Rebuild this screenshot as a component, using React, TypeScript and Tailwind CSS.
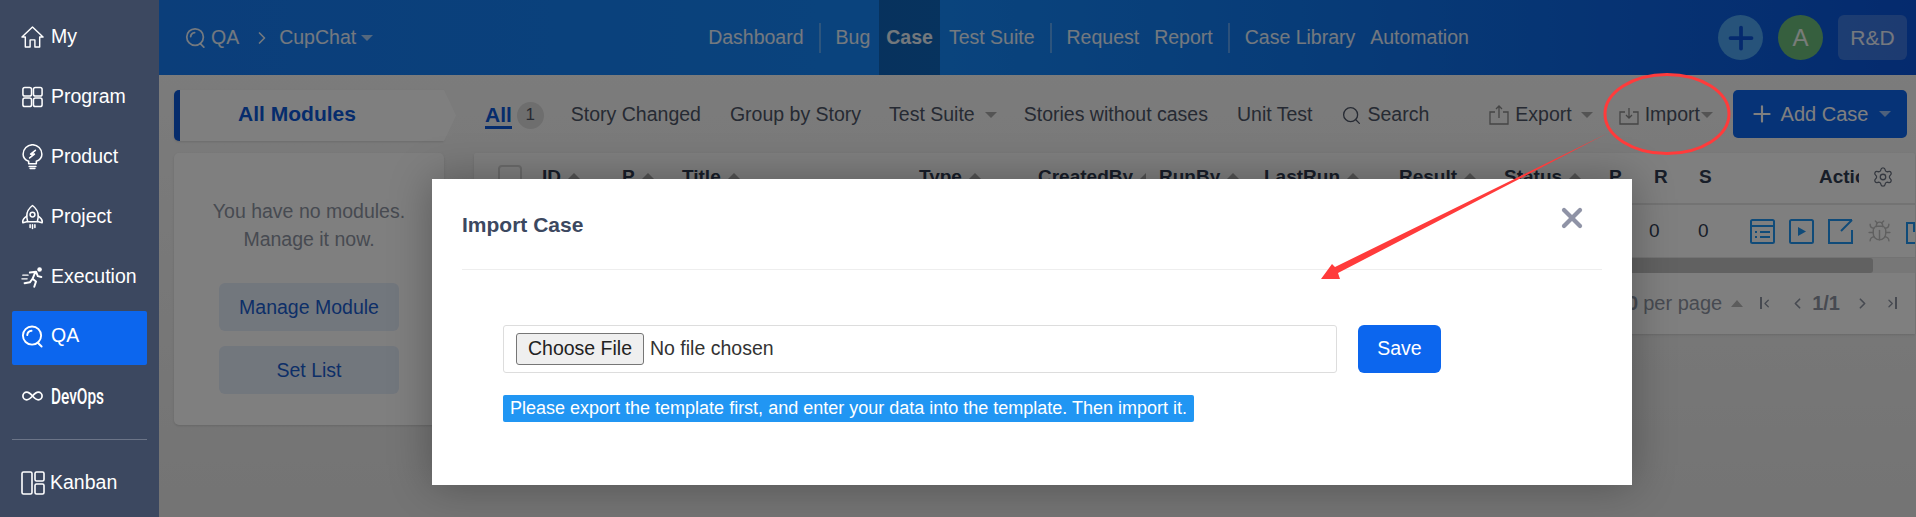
import { ReactNode } from 'react';
import { ChevronLeft, ChevronRight, Settings, Search, Plus, X, Bug, Infinity as InfinityIcon } from 'lucide-react';

const ARIAL = 'font-["Liberation_Sans",Arial,sans-serif]';

function QaIcon({ size = 24 }: { size?: number }) {
  return (
    <svg width={size} height={size} viewBox="0 0 24 24" fill="none" stroke="currentColor" strokeWidth="2" strokeLinecap="round">
      <circle cx="11.5" cy="11.5" r="9.5" />
      <path d="M17.5 19l4 4" />
      <path d="M6.5 11a5 5 0 0 1 4.5-4.5" />
    </svg>
  );
}

function HomeIcon() {
  return (
    <svg width="24" height="24" viewBox="0 0 24 24" fill="none" stroke="currentColor" strokeWidth="1.5" strokeLinejoin="round">
      <path d="M1 12L12 1.5 23 12h-3.5v10.5h-5V15h-5v7.5h-5V12z" />
    </svg>
  );
}

function ProgramIcon() {
  return (
    <svg width="24" height="24" viewBox="0 0 24 24" fill="none" stroke="currentColor" strokeWidth="1.6">
      <rect x="2" y="2" width="9" height="9" rx="2" />
      <rect x="13" y="2" width="9" height="9" rx="2" />
      <rect x="2" y="13" width="9" height="9" rx="2" />
      <rect x="13" y="13" width="9" height="9" rx="2" />
    </svg>
  );
}

function ProductIcon() {
  return (
    <svg width="24" height="26" viewBox="0 0 24 26" fill="none" stroke="currentColor" strokeWidth="1.6" strokeLinecap="round" strokeLinejoin="round">
      <path d="M8 20v-2.5C4.5 16 2.2 13 2.2 10a9.8 9.8 0 0 1 19.6 0c0 3-2.3 6-5.8 7.5V20z" />
      <path d="M8.5 23h7M9.5 25h5" />
      <path d="M15 6l-5 4h4l-5 4" fill="currentColor" />
    </svg>
  );
}

function ProjectIcon() {
  return (
    <svg width="24" height="26" viewBox="0 0 24 26" fill="none" stroke="currentColor" strokeWidth="1.6" strokeLinecap="round" strokeLinejoin="round">
      <path d="M12 1c4 3 6 7 6 11 0 2-.5 4-1 6H7c-.5-2-1-4-1-6 0-4 2-8 6-11z" />
      <circle cx="12" cy="10.5" r="2.5" />
      <path d="M6 12c-3 2-5 4-4 7l4-1M18 12c3 2 5 4 4 7l-4-1" />
      <path d="M9.5 21v3M12 21v4M14.5 21v3" />
    </svg>
  );
}

function RunIcon() {
  return (
    <svg width="26" height="24" viewBox="0 0 26 24" fill="none" stroke="currentColor" strokeWidth="2.2" strokeLinecap="round" strokeLinejoin="round">
      <circle cx="21" cy="3.5" r="2.6" fill="currentColor" stroke="none" />
      <path d="M10 7l7-1 2 5 4 1M16 7l-3 7 4 3-2 6M13 14l-3 4-6 1" />
      <path d="M2 10h6M1 14h6" strokeWidth="1.4" />
    </svg>
  );
}

function KanbanIcon() {
  return (
    <svg width="24" height="24" viewBox="0 0 24 24" fill="none" stroke="currentColor" strokeWidth="1.6">
      <rect x="1" y="1" width="10" height="22" rx="1.5" />
      <rect x="14" y="1" width="9" height="9" rx="1.5" />
      <rect x="14" y="13" width="9" height="10" rx="1.5" />
    </svg>
  );
}

function ExportIcon({ down }: { down?: boolean }) {
  return (
    <svg width="20" height="20" viewBox="0 0 20 20" fill="none" stroke="#8a8a8a" strokeWidth="1.3">
      <path d="M6 7H1v12h18V7h-5" />
      {down ? <path d="M10 3v10M7 10l3 3 3-3" /> : <path d="M10 13V1M7 4l3-3 3 3" />}
    </svg>
  );
}

function Caret({ className = '' }: { className?: string }) {
  return <span className={`inline-block w-0 h-0 border-x-[6px] border-x-transparent border-t-[6px] border-t-current ${className}`} />;
}

function SortArrow() {
  return <span className="inline-block w-0 h-0 ml-[6px] mb-[3px] border-x-[7px] border-x-transparent border-b-[7px] border-b-[#a8a8a8]" />;
}

function SideItem({ icon, label, active }: { icon: ReactNode; label: string; active?: boolean }) {
  return (
    <div className={`h-[54px] mx-3 pl-[9px] flex items-center gap-[7px] rounded-[2px] text-white text-[19.5px] ${active ? 'bg-[#0c66ee] mt-[1px] mb-[4px] pb-[4px]' : 'mb-[6px]'}`}>
      <span className="w-[23px] flex justify-center shrink-0">{icon}</span>
      <span>{label}</span>
    </div>
  );
}

function Sidebar() {
  return (
    <aside className="w-[159px] shrink-0 bg-[#3c4860] pt-[10px] flex flex-col">
      <SideItem icon={<HomeIcon />} label="My" />
      <SideItem icon={<ProgramIcon />} label="Program" />
      <SideItem icon={<ProductIcon />} label="Product" />
      <SideItem icon={<ProjectIcon />} label="Project" />
      <SideItem icon={<RunIcon />} label="Execution" />
      <SideItem icon={<QaIcon />} label="QA" active />
      <div className="h-[54px] mx-3 pl-[9px] flex items-center gap-[7px] text-white">
        <span className="w-[23px] flex justify-center shrink-0"><InfinityIcon size={26} strokeWidth={1.8} /></span>
        <span className='text-[22px] font-medium font-["Roboto",sans-serif] scale-x-[0.7] origin-left'>DevOps</span>
      </div>
      <div className="mx-3 mt-4 border-t border-[#6b7487]" />
      <div className="h-[54px] mx-3 mt-4 pl-[9px] flex items-center gap-[5px] text-white text-[19.5px]">
        <KanbanIcon />
        <span>Kanban</span>
      </div>
    </aside>
  );
}

function NavDivider() {
  return <span className="w-[2px] h-[30px] bg-white/30 mx-[15px]" />;
}

function TopBar() {
  return (
    <header className="h-[75px] shrink-0 flex items-center bg-[linear-gradient(90deg,#167cf5_0%,#1488fb_45%,#0f78f0_65%,#0a55dc_100%)] text-white/90 text-[19.5px] pl-[26px] pr-[9px]">
      <QaIcon size={21} />
      <span className="ml-[5px]">QA</span>
      <ChevronRight size={20} className="ml-[13px]" />
      <span className="ml-[7px]">CupChat</span>
      <Caret className="ml-[5px] opacity-70" />
      <nav className="ml-[335px] flex items-center h-full">
        <span>Dashboard</span>
        <NavDivider />
        <span>Bug</span>
        <span className="ml-[9px] h-full px-[7px] flex items-center font-bold bg-black/25">Case</span>
        <span className="ml-[9px]">Test Suite</span>
        <NavDivider />
        <span>Request</span>
        <span className="ml-[15px]">Report</span>
        <NavDivider />
        <span>Case Library</span>
        <span className="ml-[15px]">Automation</span>
      </nav>
      <div className="ml-auto flex items-center">
        <span className="w-[45px] h-[45px] rounded-full bg-[#4ea6f5] flex items-center justify-center text-[#0a55dc]">
          <Plus size={36} strokeWidth={2.5} />
        </span>
        <span className="ml-[15px] w-[45px] h-[45px] rounded-full bg-[#6cbf7c] flex items-center justify-center text-[24px]">A</span>
        <span className="ml-[15px] w-[69px] h-[45px] rounded-[6px] bg-white/20 flex items-center justify-center text-[21px]">R&amp;D</span>
      </div>
    </header>
  );
}

function ToolBar() {
  return (
    <div className="h-[78px] shrink-0 flex items-center pt-[2px] pl-[15px] pr-[9px] text-[19.5px] text-[#4d5566]">
      <div className="relative mt-[1px] w-[270px] h-[51px] bg-white shadow-sm rounded-l-[5px] border-l-[6px] border-[#0c58d8] flex items-center justify-center font-bold text-[21px] text-[#0c58d8] mr-[41px] pr-[30px] pb-[3px]">
        All Modules
        <span className="absolute left-full top-0 w-[12px] h-full bg-white [clip-path:polygon(0_0,100%_50%,0_100%)]" />
      </div>
      <div className="relative text-[#0c58d8] font-bold text-[21px]">
        All
        <span className="absolute left-0 right-0 top-[27px] h-[3px] bg-[#0c58d8]" />
      </div>
      <span className="ml-[5px] w-[27px] h-[27px] rounded-full bg-[#dcdcdc] flex items-center justify-center text-[17px]">1</span>
      <span className="ml-[27px]">Story Changed</span>
      <span className="ml-[29px]">Group by Story</span>
      <span className="ml-[28px]">Test Suite</span>
      <Caret className="ml-[10px] text-[#a8a8a8]" />
      <span className="ml-[27px]">Stories without cases</span>
      <span className="ml-[29px]">Unit Test</span>
      <Search size={21} className="ml-[28px] mr-[6px]" strokeWidth={1.5} />
      <span>Search</span>
      <span className="ml-[60px] mr-[6px]"><ExportIcon /></span>
      <span>Export</span>
      <Caret className="ml-[9px] text-[#a8a8a8]" />
      <span className="ml-[26px] mr-[6px]"><ExportIcon down /></span>
      <span>Import</span>
      <Caret className="ml-[1px] text-[#a8a8a8]" />
      <button className="ml-auto mb-[2px] w-[174px] h-[48px] rounded-[5px] bg-[#0c66ee] text-white text-[20px] flex items-center justify-center gap-[6px]">
        <Plus size={26} strokeWidth={2} />
        Add Case
        <Caret className="ml-[5px] opacity-60" />
      </button>
    </div>
  );
}

function ModulePanel() {
  return (
    <div className="w-[270px] h-[272px] shrink-0 ml-[15px] bg-white rounded-[5px] shadow-sm flex flex-col items-center pt-[44px] text-[#8e95a3] text-[19.5px] leading-[28px]">
      <p>You have no modules.</p>
      <p>Manage it now.</p>
      <button className="mt-[30px] w-[180px] h-[48px] rounded-[6px] bg-[#e5eefb] text-[#1a5ed0]">Manage Module</button>
      <button className="mt-[15px] w-[180px] h-[48px] rounded-[6px] bg-[#e5eefb] text-[#1a5ed0]">Set List</button>
    </div>
  );
}

const HEAD_CELLS = [
  { label: 'ID', w: 'w-[80px]', sort: true },
  { label: 'P', w: 'w-[60px]', sort: true },
  { label: 'Title', w: 'w-[237px]', sort: true },
  { label: 'Type', w: 'w-[119px]', sort: true },
  { label: 'CreatedBy', w: 'w-[108px] mr-[13px] overflow-hidden', sort: true },
  { label: 'RunBy', w: 'w-[105px]', sort: true },
  { label: 'LastRun', w: 'w-[135px]', sort: true },
  { label: 'Result', w: 'w-[105px]', sort: true },
  { label: 'Status', w: 'w-[105px]', sort: true },
  { label: 'P', w: 'w-[45px]', sort: false },
  { label: 'R', w: 'w-[45px]', sort: false },
  { label: 'S', w: 'w-[120px]', sort: false },
];

function RowIcon({ children }: { children: ReactNode }) {
  return (
    <svg width="25" height="25" viewBox="0 0 25 25" fill="none" stroke="#2196f3" strokeWidth="2" className="shrink-0">
      {children}
    </svg>
  );
}

function CaseTable() {
  return (
    <div className="flex-1 min-w-0 ml-[30px] mr-[1px] h-[181px] bg-white shadow-sm text-[#313c52] overflow-hidden rounded-t-[3px]">
      <div className="h-[52px] pl-[24px] flex items-center bg-white border-b-2 border-[#e6e6e6] font-bold text-[19px] pb-[2px]">
        <span className="w-[24px] h-[24px] rounded-[4px] border-2 border-[#d6d6d6] mr-[20px] shrink-0" />
        {HEAD_CELLS.map((c, i) => (
          <span key={i} className={`${c.w} shrink-0 whitespace-nowrap`}>
            {c.label}
            {c.sort && <SortArrow />}
          </span>
        ))}
        <span className="w-[40px] overflow-hidden shrink-0 whitespace-nowrap">Action</span>
        <Settings size={22} strokeWidth={1.4} className="ml-[13px] text-[#6b7280]" />
      </div>
      <div className="h-[53px] flex items-center border-b border-[#e6e6e6] text-[19px] pl-[1175px] overflow-hidden">
        <span className="w-[49px] shrink-0">0</span>
        <span className="w-[52px] shrink-0">0</span>
        <div className="flex items-center gap-[14px]">
          <RowIcon>
            <rect x="1" y="1" width="23" height="23" rx="1.5" />
            <path d="M1 7h23M5 13h2M10 13h10M5 18h2M10 18h10" />
          </RowIcon>
          <RowIcon>
            <rect x="1" y="1" width="23" height="23" rx="1.5" />
            <path d="M9 8l8 4.5-8 4.5z" fill="#2196f3" stroke="none" />
          </RowIcon>
          <RowIcon>
            <path d="M24 1H1v23h23V11" />
            <path d="M24 1L13 12" />
          </RowIcon>
          <Bug size={25} strokeWidth={1.4} className="text-[#c0c0c0] shrink-0" />
          <RowIcon>
            <path d="M1 4h15l8 0v20H1zM8 4v8h8V4" />
          </RowIcon>
        </div>
      </div>
      <div className="h-[15px] bg-[#eeeeee]">
        <div className="h-full w-[1399px] rounded-[3px] bg-[#c2c2c2]" />
      </div>
      <div className="h-[60px] flex items-center text-[#8e95a3] text-[20px] justify-end pr-[18px]">
        <span className="font-bold mr-[5px]">0</span>
        <span>per page</span>
        <span className="ml-[9px] mr-[17px] w-0 h-0 border-x-[6px] border-x-transparent border-b-[7px] border-b-[#b8b8b8]" />
        <span className="mr-[16px] w-[13px] flex items-center"><span className="w-[2px] h-[12px] bg-current" /><ChevronLeft size={15} strokeWidth={2.4} className="-ml-[2px]" /></span>
        <ChevronLeft size={17} strokeWidth={2.4} />
        <span className="ml-[6px] mr-[14px] font-bold text-[20px]">1/1</span>
        <ChevronRight size={17} strokeWidth={2.4} />
        <span className="ml-[13px] w-[13px] flex items-center"><ChevronRight size={15} strokeWidth={2.4} /><span className="w-[2px] h-[12px] bg-current -ml-[2px]" /></span>
      </div>
    </div>
  );
}

function ImportModal() {
  return (
    <div className="absolute left-[273px] top-[179px] w-[1200px] h-[306px] bg-white shadow-[0_0_40px_rgba(0,0,0,0.3)]">
      <div className="mx-[30px] h-[91px] border-b border-[#eeeeee] flex items-start justify-between">
        <h2 className="mt-[35px] text-[#3c4860] font-bold text-[21px] leading-[22px]">Import Case</h2>
        <X size={32} strokeWidth={3.2} className="mt-[23px] mr-[14px] text-[#8f93a6]" />
      </div>
      <div className="mt-[55px] ml-[71px] w-[938px] flex gap-[21px]">
        <div className="flex-1 h-[48px] rounded-[3px] border border-[#dddddd] pl-[12px] flex items-center text-[19.5px] text-[#333333]">
          <span className="h-[32px] w-[128px] rounded-[3px] border border-[#767676] bg-[#efefef] text-[#222222] flex items-center justify-center">Choose File</span>
          <span className="ml-[6px]">No file chosen</span>
        </div>
        <button className="w-[83px] h-[48px] rounded-[6px] bg-[#0c66ee] text-white text-[19.5px]">Save</button>
      </div>
      <div className="mt-[22px] ml-[71px] w-fit h-[27px] rounded-[2px] bg-[#2196f3] text-white px-[7px] flex items-center text-[18px]">
        Please export the template first, and enter your data into the template. Then import it.
      </div>
    </div>
  );
}

function Annotation() {
  return (
    <svg className="absolute inset-0 pointer-events-none" width="1757" height="517" viewBox="0 0 1757 517" fill="none">
      <ellipse cx="1508" cy="114" rx="62" ry="39.5" stroke="#ff3b3b" strokeWidth="3" />
      <polygon points="1449,133 1179,273 1181,279 1162,279 1173,264 1176,267" fill="#ff3b3b" />
    </svg>
  );
}

export default function App() {
  return (
    <div className={`w-[1916px] h-[517px] flex overflow-hidden ${ARIAL}`}>
      <Sidebar />
      <main className="relative flex-1 min-w-0 flex flex-col bg-[linear-gradient(180deg,#fafafa,#e8e8e8)]">
        <TopBar />
        <ToolBar />
        <div className="flex items-start">
          <ModulePanel />
          <CaseTable />
        </div>
        <div className="absolute inset-0 bg-black/50" />
        <ImportModal />
        <Annotation />
      </main>
    </div>
  );
}
